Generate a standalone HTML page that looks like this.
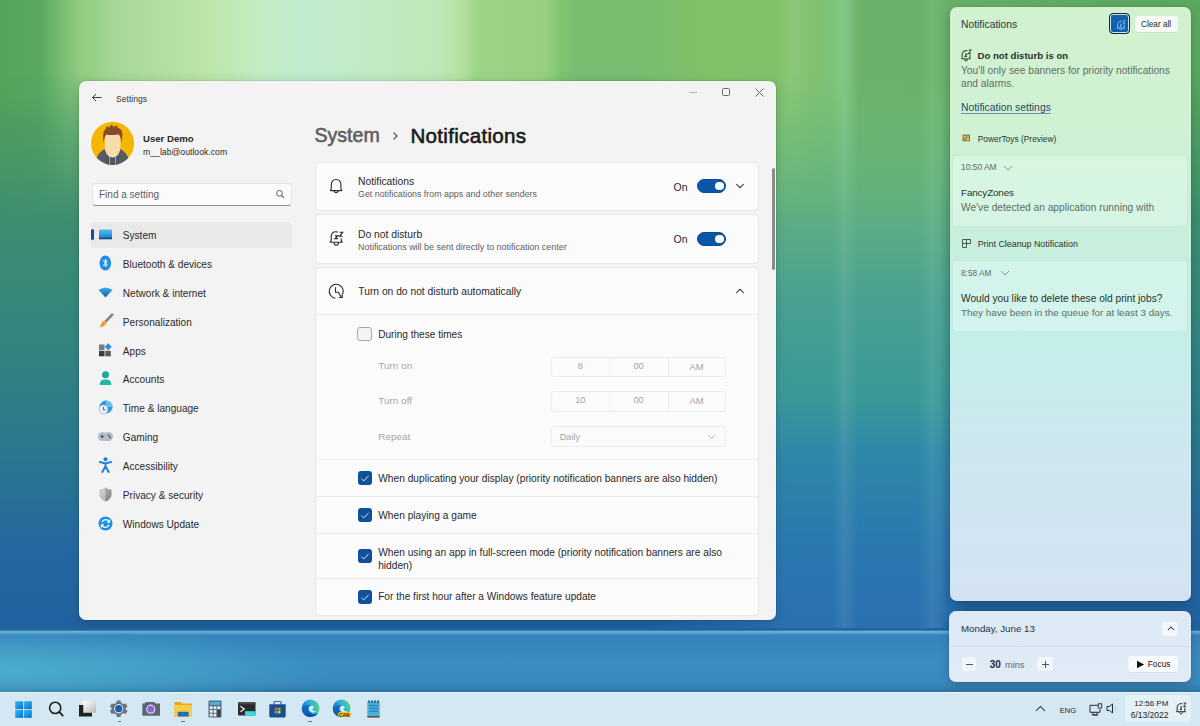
<!DOCTYPE html><html><head><meta charset="utf-8"><style>
*{margin:0;padding:0;box-sizing:border-box}
html,body{width:1200px;height:726px;overflow:hidden}
body{position:relative;font-family:"Liberation Sans",sans-serif;color:#1b1b1b;background:#3a8ac0}
.a{position:absolute}
.t{position:absolute;white-space:nowrap;line-height:1.2}
#bg0{position:absolute;left:0;top:0;width:1200px;height:692px;
 background:linear-gradient(180deg,#4e9e52 0px,#4a9a60 70px,#43946a 150px,#3b8c74 250px,#338580 340px,#2a7890 450px,#2568a0 550px,#2062a0 628px,#3a8ac0 636px,#3b8cc0 692px)}
#bg1{position:absolute;left:640px;top:0;width:330px;height:692px;
 background:linear-gradient(180deg,#78c070 0px,#70bc74 80px,#60b080 200px,#48a090 300px,#3a9898 400px,#2f88a8 450px,#2a78b0 550px,#2a70b0 628px,rgba(58,138,192,0) 634px);
 -webkit-mask-image:linear-gradient(90deg,transparent 0,#000 136px,#000 300px,transparent 330px);mask-image:linear-gradient(90deg,transparent 0,#000 136px,#000 300px,transparent 330px)}
#bg2{position:absolute;left:0;top:0;width:1200px;height:260px;
 background:linear-gradient(90deg,#55a458 0px,#5aa860 40px,#90cc80 80px,#a8d898 120px,#bce4a6 200px,#c4ecc4 260px,#c2ecd0 300px,#c2eac4 380px,#bee8b8 440px,#b4e29e 462px,#9cd488 478px,#98d080 545px,#80c472 560px,#78bc70 578px,#78bc70 640px,#80c068 700px,#80c068 775px,#8ac878 792px,#80c070 815px,#7cc47c 842px,#6cb06a 860px,#68b068 950px,#5aa860 1200px);
 -webkit-mask-image:linear-gradient(180deg,#000 0,#000 70px,rgba(0,0,0,.45) 130px,transparent 220px);mask-image:linear-gradient(180deg,#000 0,#000 70px,rgba(0,0,0,.45) 130px,transparent 220px)}
#bg3{position:absolute;left:0;top:628px;width:1200px;height:64px;
 background:linear-gradient(180deg,#2062a0 0px,#2466a2 2px,#6aaed8 3.5px,#5aa4d2 5px,#3584bc 7px,#3a8cc2 32px,#3a8bc0 54px,#3480b2 60px,#2c74a4 64px)}
#bg3b{position:absolute;left:0;top:634px;width:560px;height:58px;background:radial-gradient(ellipse 60% 75% at 0% 62%,rgba(85,190,210,.65),rgba(85,190,210,0) 100%)}
#win{position:absolute;left:79px;top:81px;width:697px;height:539px;background:#f3f3f3;border-radius:7px;box-shadow:0 0 0 1px rgba(0,0,0,.06),0 4px 10px rgba(0,0,0,.15)}
#np{position:absolute;left:950px;top:7px;width:241px;height:594px;border-radius:7px;
 background:linear-gradient(180deg,#d2f1d0 0%,#d0f2d3 19%,#c8eedc 38%,#c4eee9 56%,#cde7f0 75%,#d4e3f3 100%);box-shadow:inset 0 0 0 1px rgba(255,255,255,.35);box-shadow:0 0 0 1px rgba(0,0,0,.06),0 4px 12px rgba(0,0,0,.2)}
#cal{position:absolute;left:949px;top:611px;width:242px;height:71px;border-radius:7px;background:linear-gradient(180deg,#dde9f5,#e0ebf6);box-shadow:0 0 0 1px rgba(0,0,0,.06),0 4px 12px rgba(0,0,0,.2)}
#tb{position:absolute;left:0;top:692px;width:1200px;height:34px;background:#d3e8f2;box-shadow:inset 0 1px 0 rgba(235,248,255,.8)}
</style></head><body>
<div id="bg0"></div><div id="bg1"></div><div id="bg2"></div><div id="bg3"></div><div id="bg3b"></div>
<div class="a" style="left:832px;top:0;width:26px;height:628px;background:linear-gradient(90deg,rgba(255,255,255,0),rgba(220,255,240,.09) 50%,rgba(255,255,255,0))"></div>
<div class="a" style="left:918px;top:0;width:30px;height:628px;background:linear-gradient(90deg,rgba(255,255,255,0),rgba(220,255,240,.08) 50%,rgba(255,255,255,0))"></div>
<div id="win"></div>
<svg class="a" style="left:91px;top:92px;" width="12" height="12" viewBox="0 0 12 12"><path d="M1.5 5.5H10.5M5 2L1.5 5.5L5 9" fill="none" stroke="#3a3a3a" stroke-width="1"/></svg>
<div class="t" style="left:116.00px;top:93.86px;font-size:8.6px;color:#333;font-weight:400;">Settings</div>
<div class="a" style="left:689px;top:91.5px;width:8px;height:1.0px;background:#b8b8b8"></div>
<div class="a" style="left:722px;top:88px;width:8px;height:8px;border:1px solid #6a6a6a;border-radius:1.5px"></div>
<svg class="a" style="left:755px;top:88px;" width="9" height="9" viewBox="0 0 9 9"><path d="M0.5 0.5L8.5 8.5M8.5 0.5L0.5 8.5" stroke="#6a6a6a" stroke-width="1"/></svg>
<svg class="a" style="left:90px;top:121px;" width="46" height="46" viewBox="0 0 46 46">
<defs><clipPath id="avc"><circle cx="22.6" cy="22.3" r="21.5"/></clipPath></defs>
<circle cx="22.6" cy="22.3" r="21.5" fill="#f4b600"/>
<g clip-path="url(#avc)">
<path d="M4 46 C6 35 10 30 15.5 28 L17 34 C18.5 37 20.3 38.5 22.6 38.5 C25 38.5 26.8 37 28.2 34 L29.7 28 C35 30 39 35 41 46Z" fill="#555c68"/>
<path d="M16 29 H29.2 V46 H16Z" fill="#4e5562"/>
<path d="M14.8 14 C14.8 10 18 8.8 22.6 8.8 C27.2 8.8 30.4 10 30.4 14 V25.5 C30.4 32 27 36.5 22.6 36.5 C18.2 36.5 14.8 32 14.8 25.5Z" fill="#f7dcae"/>
<path d="M13.6 22 C12.6 15 13 9.8 16 7.6 L16.8 4.8 L19 6.4 L21.4 3.6 L23.6 5.8 L27 4.2 L27.6 6.8 C31.6 7.6 33 11 32.2 16 L31.6 22 C31.2 17.5 30.2 14.5 28.2 13.2 C24 14.4 19.4 14.2 16.2 13.4 C15 15.2 14.2 18 13.6 22Z" fill="#8a4b2c"/>
<path d="M19.6 35 V46 M25.6 35 V46" stroke="#b9c0cc" stroke-width=".8"/>
</g></svg>
<div class="t" style="left:143.00px;top:132.61px;font-size:9.6px;color:#2a2a2a;font-weight:700;">User Demo</div>
<div class="t" style="left:143.00px;top:146.77px;font-size:8.7px;color:#2a2a2a;font-weight:400;">m__lab@outlook.com</div>
<div class="a" style="left:92px;top:183px;width:200px;height:23px;background:#fbfbfb;border:1px solid #e6e6e6;border-bottom:1px solid #8c8c8c;border-radius:4px"></div>
<div class="t" style="left:99.00px;top:189.03px;font-size:10px;color:#606060;font-weight:400;">Find a setting</div>
<svg class="a" style="left:275px;top:189px;" width="10" height="10" viewBox="0 0 10 10"><circle cx="4.5" cy="4.3" r="2.9" fill="none" stroke="#5a5a5a" stroke-width="1"/><path d="M6.6 6.4L9 8.8" stroke="#5a5a5a" stroke-width="1.1"/></svg>
<div class="a" style="left:91px;top:221.5px;width:200.5px;height:26.0px;background:#e9e9e9;border-radius:4px"></div>
<div class="a" style="left:91px;top:229px;width:2.5px;height:11px;background:#1b4f8a;border-radius:1.5px"></div>
<div class="t" style="left:122.80px;top:230.04px;font-size:10.1px;color:#2a2a2a;font-weight:400;">System</div>
<div class="t" style="left:122.80px;top:258.91px;font-size:10.1px;color:#2a2a2a;font-weight:400;">Bluetooth &amp; devices</div>
<div class="t" style="left:122.80px;top:287.78px;font-size:10.1px;color:#2a2a2a;font-weight:400;">Network &amp; internet</div>
<div class="t" style="left:122.80px;top:316.65px;font-size:10.1px;color:#2a2a2a;font-weight:400;">Personalization</div>
<div class="t" style="left:122.80px;top:345.52px;font-size:10.1px;color:#2a2a2a;font-weight:400;">Apps</div>
<div class="t" style="left:122.80px;top:374.39px;font-size:10.1px;color:#2a2a2a;font-weight:400;">Accounts</div>
<div class="t" style="left:122.80px;top:403.26px;font-size:10.1px;color:#2a2a2a;font-weight:400;">Time &amp; language</div>
<div class="t" style="left:122.80px;top:432.13px;font-size:10.1px;color:#2a2a2a;font-weight:400;">Gaming</div>
<div class="t" style="left:122.80px;top:461.00px;font-size:10.1px;color:#2a2a2a;font-weight:400;">Accessibility</div>
<div class="t" style="left:122.80px;top:489.87px;font-size:10.1px;color:#2a2a2a;font-weight:400;">Privacy &amp; security</div>
<div class="t" style="left:122.80px;top:518.74px;font-size:10.1px;color:#2a2a2a;font-weight:400;">Windows Update</div>
<svg class="a" style="left:98px;top:229px;" width="15" height="11" viewBox="0 0 15 11"><defs><linearGradient id="sg" x1="0" y1="0" x2="0" y2="1"><stop offset="0" stop-color="#4cc2f0"/><stop offset="1" stop-color="#1a78c2"/></linearGradient></defs><rect x="1" y="0.5" width="13" height="9.5" rx="1" fill="url(#sg)"/><rect x="1" y="8.5" width="13" height="1.8" fill="#0f4f8a"/></svg>
<svg class="a" style="left:99px;top:255px;" width="13" height="16" viewBox="0 0 13 16"><ellipse cx="6.3" cy="8" rx="5.8" ry="7.5" fill="#1f8ce6"/><path d="M4 5.2L8.3 9.8L6.3 11.8V4.2L8.3 6.2L4 10.8" fill="none" stroke="#fff" stroke-width="1"/></svg>
<svg class="a" style="left:98px;top:287px;" width="15" height="11" viewBox="0 0 15 11"><defs><linearGradient id="wg" x1="0" y1="0" x2="0" y2="1"><stop offset="0" stop-color="#3fb0ee"/><stop offset="1" stop-color="#0d5ea8"/></linearGradient></defs><path d="M0.5 3 Q7.5 -2 14.5 3 L7.5 10.5Z" fill="url(#wg)"/></svg>
<svg class="a" style="left:98px;top:313px;" width="16" height="16" viewBox="0 0 16 16"><path d="M14.2 1.6 L7.6 8.6" stroke="#7d8288" stroke-width="2.6" stroke-linecap="round"/><path d="M6.9 7.6 C4.8 7.8 3.6 9.4 2.6 12.6 L1.8 14.4 C4.6 13.6 7.6 12.6 8.6 10.2Z" fill="#f29a26"/><path d="M6.9 7.6 L8.6 9.4 L8.6 10.2 C8.2 11 7.6 11.5 6.8 12" fill="#f7c34a" opacity=".8"/></svg>
<svg class="a" style="left:98px;top:343px;" width="15" height="14" viewBox="0 0 15 14"><rect x="1" y="1.5" width="5.5" height="5.5" fill="#7a7a7a"/><rect x="1" y="7.8" width="5.5" height="5.5" fill="#3a3a3a"/><rect x="7.3" y="7.8" width="5.5" height="5.5" fill="#5a5a5a"/><path d="M10.2 0.3 L13.7 3.8 L10.2 7.3 L6.7 3.8Z" fill="#2f8ee0"/></svg>
<svg class="a" style="left:99px;top:371px;" width="13" height="15" viewBox="0 0 13 15"><circle cx="6.5" cy="3.8" r="3.5" fill="#1fa89a"/><path d="M0.8 14 C0.8 9.5 3 8.4 6.5 8.4 C10 8.4 12.2 9.5 12.2 14Z" fill="#22b8a6"/></svg>
<svg class="a" style="left:98px;top:400px;" width="15" height="15" viewBox="0 0 15 15"><circle cx="8" cy="7" r="6.5" fill="#2a9ae0"/><path d="M8 0.5 A6.5 6.5 0 0 1 14.5 7 L8 7Z" fill="#62c3f5"/><circle cx="5.5" cy="9.5" r="4.5" fill="#e8eef4" stroke="#9aa7b5" stroke-width=".6"/><path d="M5.5 7V9.8H7.5" fill="none" stroke="#2f6fb0" stroke-width="1"/></svg>
<svg class="a" style="left:97px;top:431px;" width="17" height="11" viewBox="0 0 17 11"><rect x="1" y="1" width="15" height="9" rx="4.5" fill="#b4bcc8"/><path d="M3.6 5.5H6.6M5.1 4V7" stroke="#3c4450" stroke-width="1.1"/><circle cx="11.6" cy="4.3" r=".9" fill="#3c4450"/><circle cx="13" cy="6.4" r=".9" fill="#3c4450"/><path d="M6.5 1.5H10.5" stroke="#dfe4ea" stroke-width=".8"/></svg>
<svg class="a" style="left:99px;top:457px;" width="13" height="16" viewBox="0 0 13 16"><circle cx="6.5" cy="2.3" r="2" fill="#1a7fd4"/><path d="M1 5 L6.5 6.5 L12 5 M6.5 6.5 V9.5 L3.3 15 M6.5 9.5 L9.7 15" fill="none" stroke="#1a7fd4" stroke-width="2" stroke-linecap="round"/></svg>
<svg class="a" style="left:99px;top:487px;" width="13" height="15" viewBox="0 0 13 15"><defs><linearGradient id="pg" x1="0" y1="0" x2="1" y2="1"><stop offset="0" stop-color="#c4c8cc"/><stop offset="1" stop-color="#6f767d"/></linearGradient></defs><path d="M6.5 0.5 C8.5 2 10.5 2.5 12.5 2.5 V7 C12.5 11 9.5 13.3 6.5 14.5 C3.5 13.3 0.5 11 0.5 7 V2.5 C2.5 2.5 4.5 2 6.5 0.5Z" fill="url(#pg)"/><path d="M6.5 0.5 V14.5 C3.5 13.3 0.5 11 0.5 7 V2.5 C2.5 2.5 4.5 2 6.5 0.5Z" fill="#d6d9dc" opacity=".6"/></svg>
<svg class="a" style="left:98px;top:516px;" width="15" height="15" viewBox="0 0 15 15"><circle cx="7.5" cy="7.5" r="7" fill="#1f8fe6"/><path d="M4 6.2 A3.8 3.8 0 0 1 11 5.6 M11 8.8 A3.8 3.8 0 0 1 4 9.4" fill="none" stroke="#fff" stroke-width="1.2"/><path d="M11.6 3.5 V6.2 H9" fill="none" stroke="#fff" stroke-width="1.1"/><path d="M3.4 11.5 V8.8 H6" fill="none" stroke="#fff" stroke-width="1.1"/></svg>
<div class="t" style="left:314.40px;top:124.45px;font-size:19.6px;color:#5d5d5d;font-weight:400;-webkit-text-stroke:0.55px #5d5d5d">System</div>
<svg class="a" style="left:391px;top:130px;" width="8" height="12" viewBox="0 0 8 12"><path d="M2.5 2.5L6 6L2.5 9.5" fill="none" stroke="#5d5d5d" stroke-width="1.3"/></svg>
<div class="t" style="left:410.40px;top:123.50px;font-size:20.6px;color:#1a1a1a;font-weight:400;-webkit-text-stroke:0.6px #1a1a1a;letter-spacing:0.3px">Notifications</div>
<div class="a" style="left:315px;top:162px;width:444px;height:49px;background:#fbfbfb;border:1px solid #e8e8e8;border-radius:4px"></div>
<svg class="a" style="left:328px;top:178px;" width="16" height="16" viewBox="0 0 16 16"><path d="M8.1 1.5 C5.2 1.5 3.3 3.7 3.3 6.6 V10.2 C3.3 11 2.8 11.6 2.4 12.1 C2.2 12.4 2.4 12.6 2.8 12.6 H13.4 C13.8 12.6 14 12.4 13.8 12.1 C13.4 11.6 12.9 11 12.9 10.2 V6.6 C12.9 3.7 11 1.5 8.1 1.5Z" fill="none" stroke="#2b2b2b" stroke-width="1.1" stroke-linejoin="round"/><path d="M6.1 12.8 C6.1 14 6.9 14.6 8.1 14.6 C9.3 14.6 10.1 14 10.1 12.8" fill="none" stroke="#2b2b2b" stroke-width="1.1"/></svg>
<div class="t" style="left:358.00px;top:176.25px;font-size:10.3px;color:#2a2a2a;font-weight:400;">Notifications</div>
<div class="t" style="left:358.00px;top:188.62px;font-size:8.85px;color:#5f5f5f;font-weight:400;">Get notifications from apps and other senders</div>
<div class="t" style="left:673.50px;top:180.66px;font-size:10.5px;color:#2a2a2a;font-weight:400;">On</div>
<div class="a" style="left:697.3px;top:179.2px;width:28.40000000000009px;height:14.0px;background:#0b56a6;border:1px solid #0a4c92;border-radius:7px"></div>
<div class="a" style="left:715px;top:181.9px;width:8.600000000000023px;height:8.599999999999994px;background:#fff;border-radius:50%"></div>
<svg class="a" style="left:735px;top:182px;" width="10" height="8" viewBox="0 0 10 8"><path d="M1.3 2L5 5.7L8.7 2" fill="none" stroke="#333" stroke-width="1.05"/></svg>
<div class="a" style="left:315px;top:214px;width:444px;height:50px;background:#fbfbfb;border:1px solid #e8e8e8;border-radius:4px"></div>
<svg class="a" style="left:328px;top:228px;" width="17" height="19" viewBox="0 0 17 19"><path d="M9.8 4.1 C9 3.9 8.4 3.8 7.8 3.8 C4.8 3.8 3.2 6.2 3.2 9 V12.6 L2.1 14.3 H14.3 L13.2 12.6 V10.6" fill="none" stroke="#2b2b2b" stroke-width="1.1" stroke-linejoin="round"/><path d="M6 14.6 C6 16.3 6.9 17.3 8.2 17.3 C9.5 17.3 10.4 16.3 10.4 14.6" fill="none" stroke="#2b2b2b" stroke-width="1.1"/><path d="M7 7.9H9.9L7 10.6H9.9" fill="none" stroke="#2b2b2b" stroke-width="1.15"/><path d="M11.6 4.2H14.7L11.6 8.3H14.7" fill="none" stroke="#2b2b2b" stroke-width="1.1"/></svg>
<div class="t" style="left:358.00px;top:228.85px;font-size:10.3px;color:#2a2a2a;font-weight:400;">Do not disturb</div>
<div class="t" style="left:358.00px;top:241.53px;font-size:8.95px;color:#5f5f5f;font-weight:400;">Notifications will be sent directly to notification center</div>
<div class="t" style="left:673.50px;top:233.26px;font-size:10.5px;color:#2a2a2a;font-weight:400;">On</div>
<div class="a" style="left:697.3px;top:232.2px;width:28.40000000000009px;height:14.0px;background:#0b56a6;border:1px solid #0a4c92;border-radius:7px"></div>
<div class="a" style="left:715px;top:234.9px;width:8.600000000000023px;height:8.599999999999994px;background:#fff;border-radius:50%"></div>
<div class="a" style="left:315px;top:267px;width:444px;height:348.5px;background:#fbfbfb;border:1px solid #e8e8e8;border-radius:4px"></div>
<div class="a" style="left:316px;top:314px;width:442px;height:1px;background:#ececec"></div>
<svg class="a" style="left:327px;top:282px;" width="18" height="18" viewBox="0 0 18 18"><path d="M8.4 16.2 A7 7 0 1 1 15.4 12.6" fill="none" stroke="#2b2b2b" stroke-width="1.1"/><path d="M8.5 5.2V10.2H11.4L14.1 15" fill="none" stroke="#2b2b2b" stroke-width="1.1"/><path d="M11.9 15.5H15.2V12.4" fill="none" stroke="#2b2b2b" stroke-width="1.2"/></svg>
<div class="t" style="left:358.30px;top:286.47px;font-size:10.28px;color:#2a2a2a;font-weight:400;">Turn on do not disturb automatically</div>
<svg class="a" style="left:735px;top:287px;" width="10" height="8" viewBox="0 0 10 8"><path d="M1.3 6L5 2.3L8.7 6" fill="none" stroke="#333" stroke-width="1.05"/></svg>
<div class="a" style="left:357.3px;top:327px;width:14.5px;height:14px;background:#f4f4f4;border:1px solid #a8a8a8;border-radius:3px"></div>
<div class="t" style="left:378.20px;top:328.66px;font-size:10.08px;color:#2a2a2a;font-weight:400;">During these times</div>
<div class="t" style="left:378.20px;top:360.16px;font-size:9.97px;color:#a6a6a6;font-weight:400;">Turn on</div>
<div class="t" style="left:378.20px;top:394.56px;font-size:9.97px;color:#a6a6a6;font-weight:400;">Turn off</div>
<div class="t" style="left:378.20px;top:430.86px;font-size:9.97px;color:#a6a6a6;font-weight:400;">Repeat</div>
<div class="a" style="left:551px;top:357px;width:174.5px;height:19.5px;background:#fbfbfb;border:1px solid #ececec;border-radius:3px"></div>
<div class="a" style="left:609px;top:358px;width:1px;height:17.5px;background:#eeeeee"></div>
<div class="a" style="left:667.5px;top:358px;width:1.0px;height:17.5px;background:#eeeeee"></div>
<div class="t" style="left:560.30px;width:40px;text-align:center;top:360.79px;font-size:9.2px;color:#a4a4a4;font-weight:400;">8</div>
<div class="t" style="left:618.50px;width:40px;text-align:center;top:360.79px;font-size:9.2px;color:#a4a4a4;font-weight:400;">00</div>
<div class="t" style="left:676.50px;width:40px;text-align:center;top:360.60px;font-size:9.4px;color:#a4a4a4;font-weight:400;">AM</div>
<div class="a" style="left:551px;top:391px;width:174.5px;height:20.5px;background:#fbfbfb;border:1px solid #ececec;border-radius:3px"></div>
<div class="a" style="left:609px;top:392px;width:1px;height:18.5px;background:#eeeeee"></div>
<div class="a" style="left:667.5px;top:392px;width:1.0px;height:18.5px;background:#eeeeee"></div>
<div class="t" style="left:560.30px;width:40px;text-align:center;top:394.79px;font-size:9.2px;color:#a4a4a4;font-weight:400;">10</div>
<div class="t" style="left:618.50px;width:40px;text-align:center;top:394.79px;font-size:9.2px;color:#a4a4a4;font-weight:400;">00</div>
<div class="t" style="left:676.50px;width:40px;text-align:center;top:394.60px;font-size:9.4px;color:#a4a4a4;font-weight:400;">AM</div>
<div class="a" style="left:551px;top:426px;width:174.5px;height:21px;background:#fbfbfb;border:1px solid #ececec;border-radius:3px"></div>
<div class="t" style="left:559.70px;top:432.29px;font-size:9.2px;color:#a4a4a4;font-weight:400;">Daily</div>
<svg class="a" style="left:707px;top:434px;" width="9" height="6" viewBox="0 0 9 6"><path d="M1.5 1.5L4.5 4.5L7.5 1.5" fill="none" stroke="#a8a8a8" stroke-width="1"/></svg>
<div class="a" style="left:316px;top:459px;width:442px;height:1px;background:#ececec"></div>
<div class="a" style="left:357.7px;top:471.2px;width:14.0px;height:14.199999999999989px;background:#0e50985;background:#0f5099;border-radius:3px"></div>
<svg class="a" style="left:357.7px;top:471.2px;" width="14" height="14" viewBox="0 0 14 14"><path d="M3.4 7.6L5.7 9.9L10.6 5" fill="none" stroke="#d8ecff" stroke-width="1"/></svg>
<div class="t" style="left:378.20px;top:473.05px;font-size:10.2px;color:#2a2a2a;font-weight:400;">When duplicating your display (priority notification banners are also hidden)</div>
<div class="a" style="left:316px;top:496px;width:442px;height:1px;background:#ececec"></div>
<div class="a" style="left:357.7px;top:508.2px;width:14.0px;height:14.199999999999989px;background:#0e50985;background:#0f5099;border-radius:3px"></div>
<svg class="a" style="left:357.7px;top:508.2px;" width="14" height="14" viewBox="0 0 14 14"><path d="M3.4 7.6L5.7 9.9L10.6 5" fill="none" stroke="#d8ecff" stroke-width="1"/></svg>
<div class="t" style="left:378.20px;top:510.05px;font-size:10.2px;color:#2a2a2a;font-weight:400;">When playing a game</div>
<div class="a" style="left:316px;top:533px;width:442px;height:1px;background:#ececec"></div>
<div class="a" style="left:357.7px;top:549.2px;width:14.0px;height:14.200000000000045px;background:#0e50985;background:#0f5099;border-radius:3px"></div>
<svg class="a" style="left:357.7px;top:549.2px;" width="14" height="14" viewBox="0 0 14 14"><path d="M3.4 7.6L5.7 9.9L10.6 5" fill="none" stroke="#d8ecff" stroke-width="1"/></svg>
<div class="t" style="left:378.20px;top:546.85px;font-size:10.2px;color:#2a2a2a;font-weight:400;">When using an app in full-screen mode (priority notification banners are also</div>
<div class="t" style="left:378.20px;top:559.55px;font-size:10.2px;color:#2a2a2a;font-weight:400;">hidden)</div>
<div class="a" style="left:316px;top:578px;width:442px;height:1px;background:#ececec"></div>
<div class="a" style="left:357.7px;top:589.7px;width:14.0px;height:14.200000000000045px;background:#0e50985;background:#0f5099;border-radius:3px"></div>
<svg class="a" style="left:357.7px;top:589.7px;" width="14" height="14" viewBox="0 0 14 14"><path d="M3.4 7.6L5.7 9.9L10.6 5" fill="none" stroke="#d8ecff" stroke-width="1"/></svg>
<div class="t" style="left:378.20px;top:590.71px;font-size:10.13px;color:#2a2a2a;font-weight:400;">For the first hour after a Windows feature update</div>
<div class="a" style="left:772px;top:168px;width:2.5px;height:102px;background:#8a8a8a;border-radius:1.5px"></div>
<div id="np"></div>
<div class="t" style="left:961.00px;top:18.71px;font-size:10.34px;color:#2d3a2f;font-weight:400;">Notifications</div>
<div class="a" style="left:1109.2px;top:13.1px;width:20.799999999999955px;height:21.199999999999996px;border:1.6px solid #1d2a26;border-radius:4px;background:#1460b0;box-shadow:inset 0 0 0 1px #c9e6f3"></div>
<svg class="a" style="left:1115px;top:18.5px;transform:scale(.85);transform-origin:50% 50%" width="11" height="12" viewBox="0 0 11 12"><path d="M7.4 1.8 C7 1.7 6.6 1.6 6.2 1.6 C3.6 1.6 2.1 3.4 2.1 6 V9.6 M9.9 5.6 V9.6 M1.3 9.7 H10.7" fill="none" stroke="#9fd0f6" stroke-width="0.95" stroke-linejoin="round"/><path d="M4.4 10 C4.6 11.4 5.3 11.9 6 11.9 C6.7 11.9 7.4 11.4 7.6 10" fill="none" stroke="#9fd0f6" stroke-width="0.95"/><path d="M5 5H7L5 7.6H7 M8.6 1H11L8.6 4.4H11" fill="none" stroke="#9fd0f6" stroke-width="0.9025"/></svg>
<div class="a" style="left:1135px;top:16px;width:43px;height:16px;background:#f5faf3;border-radius:3px;box-shadow:0 0.5px 0 rgba(0,0,0,.08)"></div>
<div class="t" style="left:1141.00px;top:19.61px;font-size:8.23px;color:#2a2a2a;font-weight:400;">Clear all</div>
<svg class="a" style="left:960px;top:49px;" width="12" height="13" viewBox="0 0 12 13"><path d="M7.4 1.8 C7 1.7 6.6 1.6 6.2 1.6 C3.6 1.6 2.1 3.4 2.1 6 V9.6 M9.9 5.6 V9.6 M1.3 9.7 H10.7" fill="none" stroke="#3d5040" stroke-width="1.1" stroke-linejoin="round"/><path d="M4.4 10 C4.6 11.4 5.3 11.9 6 11.9 C6.7 11.9 7.4 11.4 7.6 10" fill="none" stroke="#3d5040" stroke-width="1.1"/><path d="M5 5H7L5 7.6H7 M8.6 1H11L8.6 4.4H11" fill="none" stroke="#3d5040" stroke-width="1.045"/></svg>
<div class="t" style="left:977.50px;top:49.91px;font-size:9.6px;color:#26332a;font-weight:700;">Do not disturb is on</div>
<div class="t" style="left:961.00px;top:65.10px;font-size:10.2px;color:#5f6d63;font-weight:400;">You'll only see banners for priority notifications</div>
<div class="t" style="left:961.00px;top:77.60px;font-size:10.2px;color:#5f6d63;font-weight:400;">and alarms.</div>
<div class="t" style="left:961.00px;top:101.99px;font-size:10.36px;color:#1d4a6e;font-weight:400;text-decoration:underline;text-decoration-color:#6f8fa6;text-underline-offset:1.5px;text-decoration-thickness:1px">Notification settings</div>
<svg class="a" style="left:962px;top:134px;" width="9" height="8" viewBox="0 0 9 8"><rect x="0.5" y="0.5" width="7.5" height="6.8" fill="#8a7a3e"/><rect x="1.6" y="1.6" width="2.4" height="2.1" fill="#d8c478"/><rect x="4.6" y="1.6" width="2.4" height="2.1" fill="#c8a850"/><rect x="1.6" y="4.2" width="2.4" height="2.1" fill="#b89a48"/><rect x="4.6" y="4.2" width="2.4" height="2.1" fill="#e0d090"/></svg>
<div class="t" style="left:977.70px;top:134.06px;font-size:8.39px;color:#2b372d;font-weight:400;">PowerToys (Preview)</div>
<div class="a" style="left:952px;top:154.5px;width:235.5px;height:72.0px;background:rgba(235,255,242,.38);border:1px solid rgba(70,120,90,.09);border-radius:5px"></div>
<div class="t" style="left:961.00px;top:162.30px;font-size:8.45px;color:#5f6d63;font-weight:400;">10:50 AM</div>
<svg class="a" style="left:1003px;top:165px;" width="10" height="6" viewBox="0 0 10 6"><path d="M1 1L5 5L9 1" fill="none" stroke="#8a978c" stroke-width="1"/></svg>
<div class="t" style="left:961.00px;top:187.43px;font-size:9.9px;color:#26332a;font-weight:400;letter-spacing:-0.15px">FancyZones</div>
<div class="t" style="left:961.00px;top:201.75px;font-size:10.2px;color:#5f6d63;font-weight:400;">We've detected an application running with</div>
<svg class="a" style="left:962px;top:239px;" width="9" height="9" viewBox="0 0 9 9"><path d="M0.5 0.5H4.5V4.5H0.5Z M4.5 0.5H8.5V4.5H4.5 M0.5 4.5V8.5H4.5V4.5" fill="none" stroke="#3d4d40" stroke-width="0.9"/></svg>
<div class="t" style="left:977.70px;top:238.84px;font-size:8.89px;color:#2b372d;font-weight:400;">Print Cleanup Notification</div>
<div class="a" style="left:952px;top:259.8px;width:235.5px;height:72.69999999999999px;background:rgba(235,255,250,.38);border:1px solid rgba(70,120,110,.09);border-radius:5px"></div>
<div class="t" style="left:961.00px;top:268.58px;font-size:8.26px;color:#5f6d63;font-weight:400;">8:58 AM</div>
<svg class="a" style="left:1000px;top:270px;" width="10" height="6" viewBox="0 0 10 6"><path d="M1 1L5 5L9 1" fill="none" stroke="#8a978c" stroke-width="1"/></svg>
<div class="t" style="left:961.00px;top:293.37px;font-size:10.17px;color:#26332a;font-weight:400;">Would you like to delete these old print jobs?</div>
<div class="t" style="left:961.00px;top:307.23px;font-size:9.9px;color:#5f6d63;font-weight:400;">They have been in the queue for at least 3 days.</div>
<div id="cal"></div>
<div class="t" style="left:961.00px;top:623.39px;font-size:9.73px;color:#2a343c;font-weight:400;">Monday, June 13</div>
<div class="a" style="left:1162px;top:621.7px;width:16.200000000000045px;height:14.299999999999955px;background:#f2f8fb;border-radius:3px"></div>
<svg class="a" style="left:1166.5px;top:626px;" width="8" height="5" viewBox="0 0 8 5"><path d="M1 4L4 1L7 4" fill="none" stroke="#333" stroke-width="1.05"/></svg>
<div class="a" style="left:950px;top:646px;width:240px;height:1px;background:rgba(90,120,150,.10)"></div>
<div class="a" style="left:961.6px;top:657px;width:14.799999999999955px;height:14.399999999999977px;background:#f1f7fb;border-radius:3px"></div>
<div class="a" style="left:966px;top:663.8px;width:6.5px;height:1.0px;background:#555"></div>
<div class="t" style="left:989.80px;top:659.13px;font-size:10px;color:#1f2a30;font-weight:700;">30</div>
<div class="t" style="left:1004.90px;top:660.00px;font-size:9.3px;color:#5f6a72;font-weight:400;">mins</div>
<div class="a" style="left:1037.2px;top:657px;width:15.799999999999955px;height:14.399999999999977px;background:#f1f7fb;border-radius:3px"></div>
<div class="a" style="left:1041.8px;top:663.8px;width:6.7999999999999545px;height:1.0px;background:#555"></div>
<div class="a" style="left:1044.7px;top:660.9px;width:1.0px;height:6.800000000000068px;background:#555"></div>
<div class="a" style="left:1128px;top:656.4px;width:49.700000000000045px;height:15.899999999999977px;background:#f7fbfd;border-radius:3px;box-shadow:0 0.5px 0 rgba(0,0,0,.08)"></div>
<svg class="a" style="left:1136px;top:659.5px;" width="9" height="9" viewBox="0 0 9 9"><path d="M1 0.8V8.2L8.2 4.5Z" fill="#111"/></svg>
<div class="t" style="left:1147.80px;top:659.94px;font-size:8.3px;color:#111;font-weight:400;">Focus</div>
<div id="tb"></div>
<svg class="a" style="left:15px;top:700.5px;" width="17" height="17" viewBox="0 0 17 17"><defs><linearGradient id="wl" x1="0" y1="0" x2="1" y2="1"><stop offset="0" stop-color="#34b8f2"/><stop offset="1" stop-color="#0a6fcf"/></linearGradient></defs><g fill="url(#wl)"><rect x="0.2" y="0.3" width="7.9" height="7.9"/><rect x="8.9" y="0.3" width="7.9" height="7.9"/><rect x="0.2" y="9" width="7.9" height="7.9"/><rect x="8.9" y="9" width="7.9" height="7.9"/></g></svg>
<svg class="a" style="left:47px;top:701px;" width="17" height="17" viewBox="0 0 17 17"><circle cx="8.2" cy="6.9" r="5.6" fill="none" stroke="#1e1e1e" stroke-width="1.6"/><path d="M12.2 10.9L15.8 14.6" stroke="#1e1e1e" stroke-width="1.8" stroke-linecap="round"/></svg>
<svg class="a" style="left:78px;top:700px;" width="19" height="18" viewBox="0 0 19 18"><defs><linearGradient id="tv" x1="0" y1="0" x2="1" y2="1"><stop offset="0" stop-color="#ffffff"/><stop offset="1" stop-color="#b8b8b8"/></linearGradient></defs><rect x="1" y="5" width="13" height="11.5" fill="#222"/><rect x="5.3" y="0.8" width="12.7" height="12" fill="url(#tv)"/></svg>
<svg class="a" style="left:110px;top:700px;" width="19" height="18" viewBox="0 0 19 18"><g transform="translate(8.7,8.7)"><path d="M-1.8 -8.3 H1.8 L2.4 -5.9 L4.6 -4.6 L7 -5.3 L8.8 -2.2 L7 -0.5 V0.5 L8.8 2.2 L7 5.3 L4.6 4.6 L2.4 5.9 L1.8 8.3 H-1.8 L-2.4 5.9 L-4.6 4.6 L-7 5.3 L-8.8 2.2 L-7 0.5 V-0.5 L-8.8 -2.2 L-7 -5.3 L-4.6 -4.6 L-2.4 -5.9Z" fill="#6b7580"/><circle r="4.6" fill="#dfe8f2"/><circle r="3.6" fill="#1a5fb0"/></g></svg>
<div class="a" style="left:117.5px;top:720.6px;width:3.299999999999997px;height:1.3999999999999773px;background:#707070;border-radius:1px"></div>
<svg class="a" style="left:142px;top:701px;" width="19" height="16" viewBox="0 0 19 16"><path d="M3.5 1 H12.5 L13.5 2.5 H18 V14.8 H0.3 V2.5 H2.5Z" fill="#5d6772"/><circle cx="8.7" cy="8.2" r="4.6" fill="#dcd8f0"/><circle cx="8.7" cy="8.2" r="3.4" fill="#8768d4"/></svg>
<svg class="a" style="left:173.5px;top:700.5px;" width="19" height="17" viewBox="0 0 19 17"><path d="M0.5 1 H6.5 L8 2.5 H18 V16 H0.5Z" fill="#e8a81c"/><path d="M0.5 4 H18 V16 H0.5Z" fill="#f7cd4a"/><rect x="3.7" y="10.8" width="11" height="4.7" rx="0.8" fill="#1f6fb8"/></svg>
<div class="a" style="left:180.8px;top:720.6px;width:4.0px;height:1.3999999999999773px;background:#707070;border-radius:1px"></div>
<svg class="a" style="left:207.5px;top:699.5px;" width="14" height="18" viewBox="0 0 14 18"><rect x="0.5" y="0.5" width="13" height="17" rx="1" fill="#56677a"/><rect x="1.8" y="1.8" width="10.4" height="3.2" fill="#4ab2e2"/><g fill="#e9eef3"><rect x="1.8" y="6.3" width="2.8" height="2.8"/><rect x="5.6" y="6.3" width="2.8" height="2.8"/><rect x="9.4" y="6.3" width="2.8" height="2.8"/><rect x="1.8" y="10" width="2.8" height="2.8"/><rect x="5.6" y="10" width="2.8" height="2.8"/><rect x="1.8" y="13.7" width="2.8" height="2.8"/><rect x="5.6" y="13.7" width="2.8" height="2.8"/></g><rect x="9.4" y="10" width="2.8" height="6.5" fill="#2b3c55"/></svg>
<svg class="a" style="left:237.5px;top:701.5px;" width="18" height="14" viewBox="0 0 18 14"><rect x="0" y="0.3" width="17.5" height="13.3" rx="0.8" fill="#2c2c2c"/><rect x="0" y="0.3" width="17.5" height="2" fill="#4a4a4a"/><path d="M2.5 4.3 L6.2 7 L2.5 9.7" fill="none" stroke="#f0f0f0" stroke-width="1.3"/><rect x="7" y="9.2" width="10.5" height="4.4" fill="#3fd6e6"/></svg>
<svg class="a" style="left:269px;top:700.5px;" width="17" height="17" viewBox="0 0 17 17"><path d="M5 3.5 V1.8 C5 0.9 5.6 0.5 6.4 0.5 H10.6 C11.4 0.5 12 0.9 12 1.8 V3.5" fill="none" stroke="#2f6fb8" stroke-width="1.2"/><path d="M0.3 3.3 H16.7 V15 C16.7 15.9 16 16.5 15.2 16.5 H1.8 C1 16.5 0.3 15.9 0.3 15Z" fill="#1b4d8c"/><rect x="5.6" y="6.6" width="2.7" height="2.7" fill="#e8553a"/><rect x="8.8" y="6.6" width="2.7" height="2.7" fill="#7bbf3a"/><rect x="5.6" y="9.8" width="2.7" height="2.7" fill="#2aa7e8"/><rect x="8.8" y="9.8" width="2.7" height="2.7" fill="#f6c02c"/></svg>
<svg class="a" style="left:300.5px;top:699px;" width="19" height="19" viewBox="0 0 19 19"><defs><linearGradient id="EDG" x1="1" y1="0.3" x2="0" y2="0.6"><stop offset="0" stop-color="#5ad27a"/><stop offset=".45" stop-color="#2cb4e0"/><stop offset="1" stop-color="#1a6fcc"/></linearGradient><linearGradient id="EDD" x1="0" y1="0" x2="1" y2="1"><stop offset="0" stop-color="#1a70cc"/><stop offset="1" stop-color="#0a4794"/></linearGradient></defs><circle cx="9.6" cy="9.2" r="8.8" fill="url(#EDG)"/><path d="M0.8 9.2 C0.8 14.6 5 18.1 9.8 18.1 C13 18.1 15.8 16.3 17.3 14.2 C15.6 15 13 15.4 10.8 14.7 C8 13.9 6.8 11.6 7 9.6 C7.2 7.6 8.8 6.4 10.6 6.4 C6 6 0.8 6.6 0.8 9.2Z" fill="url(#EDD)"/><path d="M10.6 6.7 C8.7 6.7 7.7 8.4 7.9 10.1 C8.1 12.1 9.9 13.4 12.1 13.5 C13.9 13.6 15.1 12.9 15.3 12.3 C13.6 12.6 12.1 12.1 11.6 11.1 C11.1 10.1 11.9 8.8 12.9 8.4 C12.3 7.3 11.5 6.7 10.6 6.7Z" fill="#dff2f8"/><path d="M17.3 14.2 C15.8 16.3 13 18.1 9.8 18.1 L19 18.1 L19 12.5Z" fill="#d3e8f2"/></svg>
<div class="a" style="left:308.4px;top:720.6px;width:3.6000000000000227px;height:1.3999999999999773px;background:#707070;border-radius:1px"></div>
<svg class="a" style="left:332px;top:699px;" width="19" height="19" viewBox="0 0 19 19"><defs><linearGradient id="EDC" x1="1" y1="0.3" x2="0" y2="0.6"><stop offset="0" stop-color="#5ad27a"/><stop offset=".45" stop-color="#2cb4e0"/><stop offset="1" stop-color="#1a6fcc"/></linearGradient><linearGradient id="EDE" x1="0" y1="0" x2="1" y2="1"><stop offset="0" stop-color="#1a70cc"/><stop offset="1" stop-color="#0a4794"/></linearGradient></defs><circle cx="9.6" cy="9.2" r="8.8" fill="url(#EDC)"/><path d="M0.8 9.2 C0.8 14.6 5 18.1 9.8 18.1 C13 18.1 15.8 16.3 17.3 14.2 C15.6 15 13 15.4 10.8 14.7 C8 13.9 6.8 11.6 7 9.6 C7.2 7.6 8.8 6.4 10.6 6.4 C6 6 0.8 6.6 0.8 9.2Z" fill="url(#EDE)"/><path d="M10.6 6.7 C8.7 6.7 7.7 8.4 7.9 10.1 C8.1 12.1 9.9 13.4 12.1 13.5 C13.9 13.6 15.1 12.9 15.3 12.3 C13.6 12.6 12.1 12.1 11.6 11.1 C11.1 10.1 11.9 8.8 12.9 8.4 C12.3 7.3 11.5 6.7 10.6 6.7Z" fill="#dff2f8"/><path d="M17.3 14.2 C15.8 16.3 13 18.1 9.8 18.1 L19 18.1 L19 12.5Z" fill="#d3e8f2"/></svg>
<div class="a" style="left:337.5px;top:711.5px;width:13.300000000000011px;height:5.2999999999999545px;background:#f2c42e;border-radius:2px"></div>
<div class="t" style="left:339.00px;top:712.66px;font-size:4.8px;color:#3a2a00;font-weight:700;">CAN</div>
<svg class="a" style="left:367px;top:699.5px;" width="13" height="18" viewBox="0 0 13 18"><rect x="0.3" y="1.5" width="12.4" height="14.5" fill="#4ab0de"/><g fill="#1f5f8c"><rect x="1.3" y="0.3" width="1.6" height="2.6"/><rect x="4.3" y="0.3" width="1.6" height="2.6"/><rect x="7.3" y="0.3" width="1.6" height="2.6"/><rect x="10.2" y="0.3" width="1.6" height="2.6"/></g><g fill="#2a7ab0"><rect x="2" y="5" width="9" height="1.1"/><rect x="2" y="7.8" width="9" height="1.1"/><rect x="2" y="10.6" width="9" height="1.1"/></g><rect x="0.3" y="16" width="12.4" height="1.6" fill="#6b4a2e"/></svg>
<svg class="a" style="left:1035px;top:705px;" width="11" height="7" viewBox="0 0 11 7"><path d="M1 6L5.5 1.5L10 6" fill="none" stroke="#2a2a2a" stroke-width="1.05"/></svg>
<div class="t" style="left:1059.70px;top:705.96px;font-size:7.65px;color:#2a2a2a;font-weight:400;">ENG</div>
<svg class="a" style="left:1088.5px;top:702.5px;" width="14" height="13" viewBox="0 0 14 13"><path d="M9 2.3H1V9.3H11V6" fill="none" stroke="#2a2a2a" stroke-width="1"/><rect x="9.2" y="0.8" width="3.5" height="4.2" fill="none" stroke="#2a2a2a" stroke-width="0.9"/><path d="M4 9.5V11.8H8V9.5 M2.8 12H9.2" fill="none" stroke="#2a2a2a" stroke-width="1"/></svg>
<svg class="a" style="left:1106px;top:703px;" width="13" height="11" viewBox="0 0 13 11"><path d="M1 3.5H3.5L6.5 1V10L3.5 7.5H1Z" fill="none" stroke="#2a2a2a" stroke-width="1" stroke-linejoin="round"/><path d="M9 3.5 C10 4.5 10 6.5 9 7.5" fill="none" stroke="#b9c4cc" stroke-width="1"/></svg>
<div class="a" style="left:1125px;top:695.3px;width:66px;height:26.700000000000045px;background:rgba(255,255,255,.38);border-radius:4px"></div>
<div class="t" style="left:1134.30px;top:699.28px;font-size:7.94px;color:#222;font-weight:400;">12:56 PM</div>
<div class="t" style="left:1130.70px;top:710.45px;font-size:8.5px;color:#222;font-weight:400;">6/13/2022</div>
<svg class="a" style="left:1175px;top:702px;" width="12" height="13" viewBox="0 0 12 13"><path d="M7.4 1.8 C7 1.7 6.6 1.6 6.2 1.6 C3.6 1.6 2.1 3.4 2.1 6 V9.6 M9.9 5.6 V9.6 M1.3 9.7 H10.7" fill="none" stroke="#2a2a2a" stroke-width="1" stroke-linejoin="round"/><path d="M4.4 10 C4.6 11.4 5.3 11.9 6 11.9 C6.7 11.9 7.4 11.4 7.6 10" fill="none" stroke="#2a2a2a" stroke-width="1"/><path d="M5 5H7L5 7.6H7 M8.6 1H11L8.6 4.4H11" fill="none" stroke="#2a2a2a" stroke-width=".95"/></svg>
</body></html>
